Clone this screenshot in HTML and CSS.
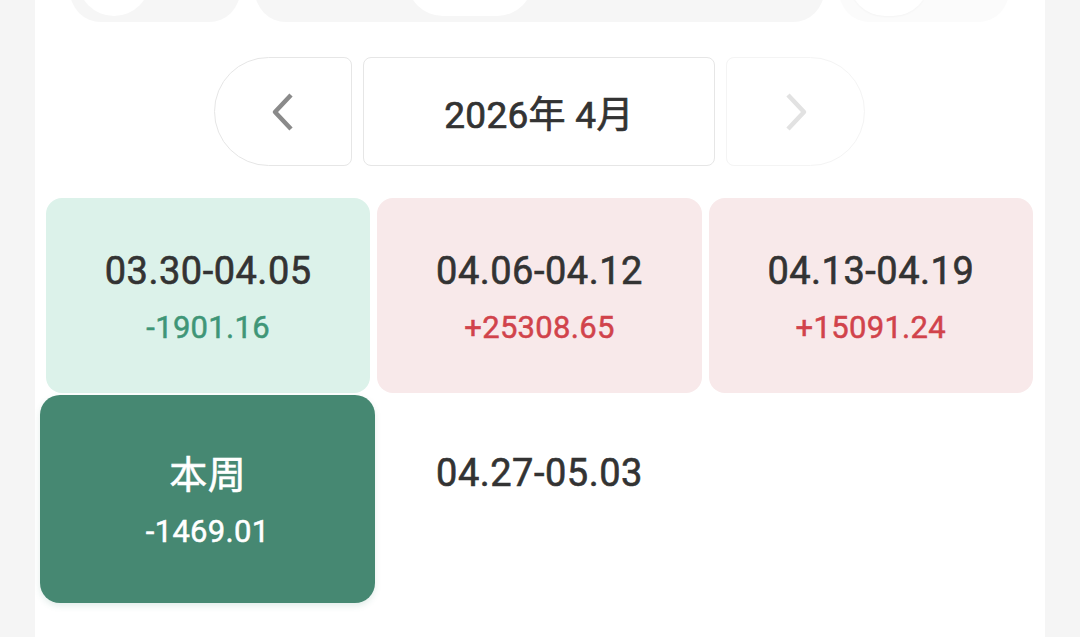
FILE: index.html
```html
<!DOCTYPE html>
<html lang="zh-CN">
<head>
    <meta charset="UTF-8">
    <meta name="viewport" content="width=device-width, initial-scale=1.0">
    <title>周收支</title>
    <link rel="stylesheet" href="styles.css">
</head>
<body>
    <div class="panel">
        <div class="tabs">
            <div class="pill pill-small">
                <span class="knob"></span>
            </div>
            <div class="pill pill-wide">
                <span class="knob knob-wide"></span>
            </div>
            <div class="pill pill-small pill-faint">
                <span class="knob knob-faint"></span>
            </div>
        </div>

        <div class="month-nav">
            <button class="nav-btn nav-prev" type="button" aria-label="上个月">
                <svg width="26" height="40" viewBox="0 0 26 40">
                    <path d="M21 3 L5 20 L21 37" fill="none" stroke="#8a8a8a" stroke-width="4.5" stroke-linejoin="round"/>
                </svg>
            </button>
            <div class="month-label">2026年 4月</div>
            <button class="nav-btn nav-next" type="button" aria-label="下个月">
                <svg width="26" height="40" viewBox="0 0 26 40">
                    <path d="M5 3 L21 20 L5 37" fill="none" stroke="#e2e2e2" stroke-width="4.5" stroke-linejoin="round"/>
                </svg>
            </button>
        </div>

        <div class="weeks">
            <div class="week week-down">
                <div class="week-range">03.30-04.05</div>
                <div class="week-amount">-1901.16</div>
            </div>
            <div class="week week-up">
                <div class="week-range">04.06-04.12</div>
                <div class="week-amount">+25308.65</div>
            </div>
            <div class="week week-up">
                <div class="week-range">04.13-04.19</div>
                <div class="week-amount">+15091.24</div>
            </div>
            <div class="week week-current">
                <div class="week-range">本周</div>
                <div class="week-amount">-1469.01</div>
            </div>
            <div class="week">
                <div class="week-range">04.27-05.03</div>
                <div class="week-amount"></div>
            </div>
        </div>
    </div>
</body>
</html>
```

FILE: styles.css
```css
* {
    margin: 0;
    padding: 0;
    box-sizing: border-box;
}

body {
    background-color: #f5f5f5;
    font-family: Roboto, "Noto Sans CJK SC", sans-serif;
}

.panel {
    background: white;
    margin: 0 35px;
    min-height: 637px;
    overflow: hidden;
    padding: 0 12px 0 11px;
}

/* segmented control, mostly scrolled out of view */
.tabs {
    display: flex;
    gap: 15px;
    margin: -40px 24px 0 24px;
}

.pill {
    background-color: #f6f6f6;
    border-radius: 31px;
    height: 62px;
    display: flex;
    align-items: flex-end;
    padding: 0 0 6px 8px;
}

.pill-small {
    width: 170px;
}

.pill-wide {
    flex: 1;
    padding-left: 152px;
}

.pill-faint {
    background-color: #fbfbfb;
    padding-left: 10px;
}

.knob {
    display: block;
    width: 72px;
    height: 72px;
    border-radius: 36px;
    background: white;
}

.knob-wide {
    width: 126px;
}

.knob-faint {
    width: 80px;
    box-shadow: 0 1px 2px rgba(0, 0, 0, 0.03);
}

.month-nav {
    display: flex;
    justify-content: center;
    gap: 11px;
    margin-top: 35px;
}

.nav-btn {
    width: 138px;
    height: 109px;
    background: white;
    border: 1px solid #e6e6e6;
    display: flex;
    align-items: center;
    justify-content: center;
}

.nav-prev {
    border-radius: 55px 8px 8px 55px;
}

.nav-next {
    border-color: #f4f4f4;
    border-radius: 8px 55px 55px 8px;
    width: 139px;
}

.month-label {
    width: 352px;
    height: 109px;
    border: 1px solid #e6e6e6;
    border-radius: 8px;
    display: flex;
    align-items: center;
    justify-content: center;
    font-size: 37px;
    font-weight: 400;
    letter-spacing: 0.3px;
    color: #333;
    -webkit-text-stroke: 0.7px #333;
}

.weeks {
    display: grid;
    grid-template-columns: repeat(3, 1fr);
    grid-auto-rows: 195px;
    gap: 7px;
    margin-top: 32px;
}

.week {
    border-radius: 16px;
    display: flex;
    flex-direction: column;
    align-items: center;
    justify-content: center;
    gap: 14px;
    padding-top: 3px;
}

.week-range {
    font-size: 38px;
    font-weight: 400;
    line-height: 48px;
    letter-spacing: 0.5px;
    color: #333;
    -webkit-text-stroke: 0.6px #333;
}

.week-amount {
    font-size: 31px;
    font-weight: 400;
    line-height: 38px;
    min-height: 38px;
    letter-spacing: 0.3px;
    -webkit-text-stroke: 0.5px currentColor;
}

.week-down {
    background-color: #dcf2ea;
}

.week-down .week-amount {
    color: #3f9677;
}

.week-up {
    background-color: #f8e9ea;
}

.week-up .week-amount {
    color: #d1434b;
}

.week-current {
    background-color: #468872;
    border-radius: 20px;
    margin: -5px -5px -8px -6px;
    box-shadow: 0 3px 6px rgba(70, 136, 114, 0.15);
}

.week-current .week-range,
.week-current .week-amount {
    color: white;
    -webkit-text-stroke-color: white;
}
```
